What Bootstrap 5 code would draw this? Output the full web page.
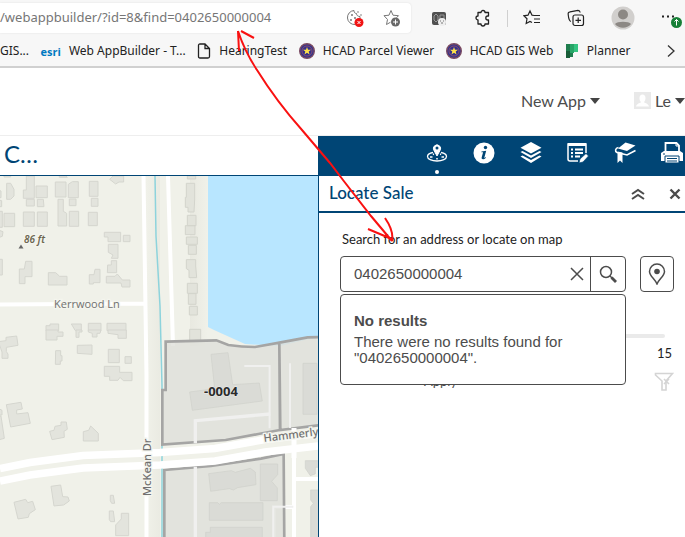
<!DOCTYPE html>
<html lang="en">
<head>
<meta charset="utf-8">
<meta name="viewport" content="width=device-width, initial-scale=1">
<title>Locate Sale</title>
<link href="https://cdn.jsdelivr.net/npm/bootstrap@5.3.0/dist/css/bootstrap.min.css" rel="stylesheet">
<style>
:root { --navy: #004575; --ink: #4c4c4c; }
body { font-family: Lato, "Liberation Sans", sans-serif; font-size: 16px; background: #fff; }
svg { display: block; flex: none; }
button { color: inherit; }
.plain-btn { border: 0; background: none; padding: 0; }

.browser-bar { background: #f7f7f7; border-bottom: 2px solid #d0d0d0; font-family: "Noto Sans", sans-serif; }
.address-row { height: 36px; padding: 3px 2px 3px 0; }
.address-box { flex: 1 1 0; height: 30px; background: #fff; border-radius: 0 4px 4px 0; padding-right: 10px; gap: 19px; box-shadow: 0 0 2px #ddd; }
.address-box input { border: 0; padding: 0; min-width: 0; color: #767676; font-size: 13px; background: none; outline: 0; }
.browser-tools { padding-left: 20px; gap: 26px; }
.tool-rule { width: 1px; height: 17px; background: #d0d0d0; margin: 0 -11px; }
.bookmark-row { height: 30px; font-size: 12px; padding-right: 9px; }
.bookmark-row a { color: #222; text-decoration: none; gap: 8px; white-space: nowrap; }
.esri-mark { color: #0079c1; font: bold 11px "Open Sans", sans-serif; }

.site-head { height: 68px; border-bottom: 1px solid #eee; color: var(--ink); gap: 34px; overflow: hidden; padding-bottom: 2px; }
.site-head button { gap: 4px; }
.caret { border: 5px solid transparent; border-top: 6px solid #444; border-bottom: 0; }

.workspace { display: grid; grid-template-columns: 318fr 367fr; grid-template-rows: 40px 1fr; }
.map-title { border-bottom: 1px solid var(--navy); color: var(--navy); font-size: 24px; padding-left: 4px; line-height: 36px; margin: 0; font-weight: 400; }
.widget-bar { background: var(--navy); color: #fff; gap: 25px; padding: 5px 2px 0 0; }
.widget-bar button { position: relative; height: 24px; }
.widget-bar .is-open::after { content: ""; position: absolute; left: 9px; top: 29px; width: 4px; height: 4px; border-radius: 50%; background: #fff; }
.map-pane { overflow: hidden; background: #f0f1e9; position: relative; }
.map-pane svg { position: absolute; width: 100%; height: 100%; }
.side-panel { border-left: 1px solid var(--navy); color: var(--ink); }
.panel-head { height: 37px; border-bottom: 2px solid var(--navy); padding: 0 4px 0 10px; }
.panel-head h2 { font-size: 17px; color: var(--navy); margin: 0; }
.panel-body { padding: 17px 11px 0 21px; }
.panel-body label { font-size: 13px; line-height: 18px; color: #222; padding-left: 2px; }
.search-row { gap: 14px; margin-top: 8px; }
.search-box { position: relative; border: 1px solid var(--ink); border-radius: 4px; height: 36px; }
.search-box input { border: 0; outline: 0; min-width: 0; padding: 0 0 2px 13px; background: none; color: var(--ink); font: 15px "Liberation Sans", sans-serif; }
.search-box .clear { width: 26px; }
.search-box .go { width: 35px; border-left: 1px solid var(--ink); }
.pin-btn { border: 1px solid var(--ink); border-radius: 4px; width: 34px; height: 36px; background: #fff; padding: 0; }
.result-menu { position: absolute; left: -1px; right: -1px; top: 37px; height: 91px; z-index: 2; background: #fff; border: 1px solid var(--ink); border-radius: 4px; padding: 18px 13px; font: 15px/16px "Liberation Sans", sans-serif; }
.result-menu strong { display: block; margin-bottom: 5px; }
.track { height: 4px; border-radius: 2px; background: #eaeaea; margin: 42px 9px 0 0; }
.limit { font-size: 13px; line-height: 18px; color: #222; margin: 6px 2px 0 0; }
.apply-row { margin-top: 10px; font-size: 13px; line-height: 18px; padding-left: 84px; }
.markup { position: absolute; left: 0; top: 0; pointer-events: none; z-index: 5; }
</style>
<script src="https://cdn.jsdelivr.net/npm/bootstrap@5.3.0/dist/js/bootstrap.bundle.min.js"></script>
</head>
<body class="min-vh-100 d-flex flex-column position-relative overflow-hidden">

<div class="browser-bar">
  <div class="address-row d-flex align-items-center">
    <div class="address-box d-flex align-items-center">
      <input class="flex-grow-1" type="text" aria-label="Address" value="/webappbuilder/?id=8&amp;find=0402650000004">
      <button class="plain-btn" aria-label="Cookies blocked">
        <svg width="18" height="18" viewBox="0 0 18 18" fill="none" stroke="#777"><path d="M8 1.500a7 7 0 1 0 1 14M8 1.500c0 2 1 3 2.500 3 0 2 1.500 3 3.500 3v2"/><g fill="#777" stroke="none"><circle cx="6" cy="6" r="1"/><circle cx="5" cy="11" r="1"/><circle cx="9" cy="9" r="1"/><circle cx="12" cy="3" r=".8"/><circle cx="15" cy="6" r=".8"/></g><circle cx="13" cy="13.500" r="4.500" fill="#f01414" stroke="none"/><path d="M11.500 12l3 3m0-3l-3 3" stroke="#fff"/></svg>
      </button>
      <button class="plain-btn" aria-label="Add to favorites">
        <svg width="18" height="18" viewBox="0 0 18 18" fill="none" stroke="#777"><path d="M7.500 13.200L3.500 15.500l1-5L1 6.700l5-.5 2-4.700 2 4.700 5.500.5-2 2" stroke-linejoin="round"/><circle cx="12.500" cy="13" r="4.500" fill="#686868" stroke="none"/><path d="M12.500 10.500v5m-2.500-2.500h5" stroke="#fff"/></svg>
      </button>
    </div>
    <div class="browser-tools d-flex align-items-center">
      <button class="plain-btn" aria-label="Extension">
        <svg width="17" height="17" viewBox="0 0 17 17"><rect x="1" y="2" width="14" height="13" rx="2" fill="#505050"/><path d="M3 6l2-2 2 2v4l-2 2-2-2zM9 5h4v4H9z" fill="none" stroke="#999"/><circle cx="11" cy="12" r="4" fill="#eee"/><path d="M9 11h1m2 0h1m-3 2h2" stroke="#777"/></svg>
      </button>
      <button class="plain-btn" aria-label="Extensions">
        <svg width="18" height="18" viewBox="0 0 18 18" fill="none" stroke="#222" stroke-width="1.300"><path d="M4 3.500H7a2 2 0 0 1 4 0h3.500V7h-.7a2 2 0 0 0 0 4h.7v4H11a2 2 0 0 1-4 0H4v-4a2 2 0 0 1 0-4z" stroke-linejoin="round"/></svg>
      </button>
      <span class="tool-rule"></span>
      <button class="plain-btn" aria-label="Favorites">
        <svg width="18" height="18" viewBox="0 0 18 18" fill="none" stroke="#222" stroke-width="1.200"><path d="M11 6.500L9 6.200 7 2 5 6.200l-4 .6 3 3-.8 4.700L7 12.500l2 1M11 6.500h6m-6 3.500h6m-6 3.500h6"/></svg>
      </button>
      <button class="plain-btn" aria-label="Collections">
        <svg width="18" height="18" viewBox="0 0 18 18" fill="none" stroke="#222" stroke-width="1.200"><rect x="6" y="6" width="10.500" height="10.500" rx="2"/><path d="M11.200 8.500v5.500m-2.700-2.700H14M4 12.500C2 12 1.500 9 1.200 5.500 1 4 1.500 3 3 2.800l8-1.500c1.500 0 2 .8 2.200 2.200"/></svg>
      </button>
      <button class="plain-btn" aria-label="Profile">
        <svg width="24" height="24" viewBox="0 0 24 24"><circle cx="12" cy="12" r="11.500" fill="#d1cfcd"/><circle cx="12" cy="8.500" r="5" fill="#8c8884"/><path d="M4 18c2-3 14-3 16 0-4 5-12 5-16 0z" fill="#8c8884"/></svg>
      </button>
      <button class="plain-btn" aria-label="Settings, update available">
        <svg width="22" height="22" viewBox="0 0 22 22"><path d="M1 9.500h2m3 0h2m3 0h2" stroke="#222" stroke-width="2"/><circle cx="15.500" cy="15.500" r="5.500" fill="#178037"/><path d="M15.500 18.500v-6m-2 2l2-2 2 2" fill="none" stroke="#fff"/></svg>
      </button>
    </div>
  </div>
  <nav class="bookmark-row d-flex align-items-center justify-content-between" aria-label="Bookmarks">
    <a class="d-flex" href="#">GIS...</a>
    <a class="d-flex align-items-center" href="#"><span class="esri-mark">esri</span>Web AppBuilder - T...</a>
    <a class="d-flex align-items-center" href="#"><svg width="14" height="16" viewBox="0 0 14 16" fill="none" stroke="#222" stroke-width="1.300"><path d="M1.500 2.500q0-1.500 1.500-1.500h5l4.500 4.500v8q0 1.500-1.500 1.500H3q-1.500 0-1.500-1.500zM8 1v4.500h4.500"/></svg>HearingTest</a>
    <a class="d-flex align-items-center" href="#"><svg width="16" height="16" viewBox="0 0 16 16"><circle cx="8" cy="8" r="7.300" fill="#33358c" stroke="#7b4b62" stroke-width="1.400"/><circle cx="8" cy="8" r="5" fill="#34308a" stroke="#8a4b70"/><path d="M8 4l1 2.800h3L9.700 8.500l.8 2.900L8 9.700l-2.500 1.700.8-2.900L4 6.800h3z" fill="#ffe14a"/></svg>HCAD Parcel Viewer</a>
    <a class="d-flex align-items-center" href="#"><svg width="16" height="16" viewBox="0 0 16 16"><circle cx="8" cy="8" r="7.300" fill="#33358c" stroke="#7b4b62" stroke-width="1.400"/><circle cx="8" cy="8" r="5" fill="#34308a" stroke="#8a4b70"/><path d="M8 4l1 2.800h3L9.700 8.500l.8 2.900L8 9.700l-2.500 1.700.8-2.900L4 6.800h3z" fill="#ffe14a"/></svg>HCAD GIS Web</a>
    <a class="d-flex align-items-center" href="#"><svg width="14" height="16" viewBox="0 0 14 16"><path d="M1 1h7v13H1z" fill="#1f7d4d"/><path d="M1 8h4v7H1z" fill="#185c37"/><path d="M5 1h4v9H5z" fill="#27a567"/><path d="M9 1h4v8H9z" fill="#35c481"/></svg>Planner</a>
    <button class="plain-btn ms-4" aria-label="More bookmarks"><svg width="10" height="14" viewBox="0 0 10 14" fill="none" stroke="#333" stroke-width="1.300"><path d="M2 1.500L8 7l-6 5.500"/></svg></button>
  </nav>
</div>

<header class="site-head d-flex align-items-center justify-content-end">
  <button class="plain-btn d-flex align-items-center">New App<span class="caret"></span></button>
  <button class="plain-btn d-flex align-items-center"><svg width="17" height="17" viewBox="0 0 17 17"><path fill="#e9e9e9" d="M0 0h17v17H0z"/><path fill="#fff" d="M8.500 2.500c4 0 3.500 6 1.500 7.500 0 1 4 1 5 4.500H2c1-3.500 5-3.500 5-4.500-2-1.500-2.500-7.500 1.500-7.500z"/></svg>Le<span class="caret"></span></button>
</header>

<main class="workspace flex-grow-1">
  <h1 class="map-title">C…</h1>
  <div class="widget-bar d-flex justify-content-end">
    <button class="plain-btn is-open" aria-label="Locate">
      <svg width="22" height="22" viewBox="0 0 22 22" fill="none" stroke="#fff"><path d="M7 10.500C4 11 1.500 12.500 1.500 14.500c0 2.500 4 4.500 9.500 4.500s9.500-2 9.500-4.500c0-2-2.500-3.500-5.500-4" stroke-width="1.300"/><path d="M11 14L8 8.500a3.600 3.600 0 1 1 6 0z" fill="#fff"/><circle cx="11" cy="6" r="1.500" fill="#004575" stroke="none"/><path d="M4 15h2.500m9 0H18m-7 1v1.500M7 12l1 .5m7-.5l-1 .5" stroke-width="1.500"/></svg>
    </button>
    <button class="plain-btn" aria-label="About">
      <svg width="22" height="22" viewBox="0 0 22 22"><circle cx="11" cy="11" r="10.500" fill="#fff"/><circle cx="12.500" cy="5.500" r="1.700" fill="#004575"/><path d="M8.500 9.500l4.700-.8-2 7.300 1.800-1-.3 1c-1.500 1.500-4.700 2-4 -.7l1.400-5-1.800-.1z" fill="#004575"/></svg>
    </button>
    <button class="plain-btn" aria-label="Layers">
      <svg width="22" height="22" viewBox="0 0 22 22" fill="#fff"><path d="M11 0l10.500 5.800L11 11.600.5 5.800zM.5 10l2-1L11 13.500 19.500 9l2 1L11 16zM.5 14.500l2-1L11 18l8.500-4.500 2 1L11 21z"/></svg>
    </button>
    <button class="plain-btn" aria-label="Edit">
      <svg width="22" height="22" viewBox="0 0 22 22" fill="none" stroke="#fff"><path d="M11 19H3q-2 0-2-2V2h18v9" stroke-width="1.500"/><path d="M1 2.500h18" stroke-width="3"/><path d="M4 7.500h2m2 0h8m-12 3.500h2m2 0h8m-12 3.500h2m2 0h5" stroke-width="1.800"/><path d="M12 21l1-4 6-5.500 2.500 2.500-5.500 6z" fill="#fff" stroke="#004575" stroke-width=".7"/></svg>
    </button>
    <button class="plain-btn" aria-label="Bookmarks">
      <svg width="22" height="22" viewBox="0 0 22 22"><path fill="#fff" d="M11.500 .5L21.500 3.500 13 9 4 6.500z"/><path d="M4.500 5.500C1 6 .8 9.500 3 10.500l10 2.500 8.500-4.500" fill="none" stroke="#fff" stroke-width="1.600"/><path fill="#fff" d="M3.500 9.500L8.500 10.500V21L6 18.500 3.500 21z"/></svg>
    </button>
    <button class="plain-btn" aria-label="Print">
      <svg width="22" height="22" viewBox="0 0 22 22"><path d="M0 11l3-2h16l3 2v8H0z" fill="#fff"/><path d="M4.500 9V1h11l2.500 2.500V9" fill="none" stroke="#fff" stroke-width="1.800"/><path d="M15 1v3h3" fill="none" stroke="#fff"/><path d="M4 14h14v7H4z" fill="#fff" stroke="#004575"/><path d="M6 16.500h10M6 19h10M2 12h2" stroke="#004575"/></svg>
    </button>
  </div>

  <section class="map-pane" aria-label="Map">
    <svg viewBox="0 176 318 361" preserveAspectRatio="xMinYMin slice" font-family="'Noto Sans', sans-serif">
      <defs><linearGradient id="strip"><stop offset="0" stop-color="#f0f1e9"/><stop offset=".5" stop-color="#e3e3da"/><stop offset="1" stop-color="#f0f1e9"/></linearGradient></defs>
      <path fill="#f0f1e9" d="M0 176h318v361H0z"/>
      <path fill="url(#strip)" d="M146 176h14v361h-14zM190 176h18v170h-18z"/>
      <!-- water -->
      <path fill="#b8e6ff" d="M208 176h110v162l-13 2-25 6-35-2-31-14-6-3z"/>
      <!-- buildings, west block -->
      <g transform="translate(0 130) scale(.3333)" fill="#e3e4dd" stroke="#d5d6cf" stroke-width="3">
        <path d="M-5 180l8 3v20h-8zM-5 210l10 2v18h-10zM20 160h12l10 18v20l-10 10H20zM79 138h24v67H70v-25h9zM108 168h34v35h-34zM79 208h24v20H79zM112 208h18l2 22h-20zM166 156h32v45h-32zM205 163l12-8h18v48h-30zM208 207h20v20h-20zM268 154h26v45h-26zM274 205h20v24h-20zM329 148l10-10h32v18h-14l-10 6zM178 138h20l4 4h-24zM12 137h20v4H12zM-5 244h12v48H-5zM12 250h32v40H12zM70 246h33v43H70zM112 246h30v43h-30zM174 208h16v36l10 6v38h-26zM208 244h28v45h-28zM265 247h27v40h-27zM-5 300l14 5-2 14-12 4zM-5 388h12v47H-5zM58 417h15l4-23h19v46H75v21H58zM145 428h22l12 11h22v26h-56zM268 434h14l3-16h15v40h-20v4h-12zM313 307h49v28h-38v-14h-11zM370 316h20v19h-20zM325 343h29v42h-20l5-10-14-8zM323 405h11v-13h16v36h-28zM319 439h26l7-7 15 18h23v21h-24l-3-12h-44zM138 587h12v-5h26v20h-38zM214 582h30v20h-18zM265 580h38v22h-38zM321 580h57v22h-57z"/>
      </g>
      <g transform="translate(0 330) scale(.3333)" fill="#e3e4dd" stroke="#d5d6cf" stroke-width="3">
        <path d="M138 0h36v6h15v13h-18v11h-33zM228 0h18v6h-9v16h-9zM265 0h38l-3 10h-9v11h-14V10l-12-4zM324 0h55v25h-25V14l-30-4zM-5 35l23-3v-10l32-4 4 28-35 6v13l5 7v13H6V66l-4-11zM167 62h15v15h4v16h-5v10h-15zM232 46l44-1v28l-44-3zM325 58h33v40h-33zM375 80h19v20h-19zM313 109h46v18h37v25h-26l-10-10-6 9h-25v-12h-16zM19 224l44-7 4 20-17 3v12l34-4 7 32-59 11zM-5 235l11 6v14H-5zM-5 258h8l10 67-18 5zM149 304l13-3 3-12 18-3v-10h16l3 22-10 6 1 18-37 7zM250 305l16-4 6-13 23 22v23h-45zM153 469l29-4 6 35 16 1 4 12-17 12-29 3zM42 517l35-9 6 10 15-4 8 25-18 12-3 11-31 5zM331 496h9l4 24h-9l-4-8zM328 543h12l4 32h-12l-4-6zM347 585l17-18v-17h22v67h-39z"/>
      </g>
      <!-- buildings along the water -->
      <g transform="translate(150 130) scale(.3333)" fill="#e2e3db" stroke="#d3d4cc" stroke-width="3">
        <path d="M112 138h25v9h-25zM109 160h25v50l-2 36h-18v-14h-8v-30h3zM112 256h26v31h-26zM106 287h29v27h-29zM109 321h33v22h-33zM115 346h24v27h-24zM109 389h28v19l3 35h-23v-22l-8-5zM112 460h30v30h-30zM115 491h23v32h-23zM118 529h24v26h-24zM119 598h33v35h-33z"/>
      </g>
      <!-- creek and local streets -->
      <path fill="none" stroke="#8dd3dc" stroke-width="1.500" d="M155 176l1 60 4 70 2 80v151"/>
      <g fill="none" stroke="#fff" stroke-width="4">
        <path d="M143.500 176l3 200v161M168 176l5 170M0 304.500l145-1"/>
        <path d="M294 430v107M294 479h24M274 537v-30h20" stroke-width="4"/>
      </g>
      <!-- selected parcels -->
      <g transform="translate(150 330) scale(.3333)">
        <g fill="#dfe0da" fill-opacity=".8" stroke="#a5a5a4" stroke-width="8">
          <path d="M47 35l152-4 36 14q40 6 80 6l73-13 2 262-65 12-98 18-190 14V180h10zM388 38l85-16 50-1v263l-132 16z"/>
          <path d="M43 640V420l140-12 150-22 68-14 2 268z"/>
        </g>
        <g fill="none" stroke="#f0f0ef" stroke-width="10"><path d="M136 340v-68l225-20M136 410v230"/><path d="M283 108h76v187M420 100v194M370 640V530h60" stroke-width="6"/></g>
        <g fill="#dadbd6" stroke="#cfd0ca" stroke-width="2"><path d="M183 73l51-5 14 96 80-5 9 54-210 28-8-55 75-10zM459 100h42v153h-42zM176 431l68-9 12 5 45-12 15 11 2 38-55 9-13 7-12-4-56 8zM331 402h52v32l-18 20 17 20v38h-51zM178 518h25l5 5 6-5h125v53H178zM167 607h14v-15h156v48H167zM466 392h60v20h-30v20l-15 5-15-22zM482 480h38v160h-38v-110l8-10-8-10z"/></g>
      </g>
      <!-- divided avenue -->
      <path fill="none" stroke="#fff" stroke-width="7.500" d="M0 468.500l30-6 53-7 77-3 55-4 50-9 53-6M0 481l30-6 53-7 77-3 55-4 50-9 53-6"/>
      <path stroke="#fff" stroke-width="5" d="M294 428v30"/>
      <g fill="#707070" stroke="#f4f5ee" stroke-width="2.500" paint-order="stroke" font-size="11" font-weight="500">
        <text x="54" y="308" font-family="'Open Sans', sans-serif">Kerrwood Ln</text>
        <text transform="translate(151 496) rotate(-90)">McKean Dr</text>
        <text transform="translate(264 442) rotate(-7)">Hammerly</text>
        <text x="24" y="243" font-size="10" font-style="italic" font-weight="600" fill="#6c6650">86 ft</text>
      </g>
      <path d="M18.500 248.500l2.500-4 2.500 4z" fill="#666"/>
      <text x="204" y="396" font-size="13" font-weight="700" fill="#2b2b2b" stroke="#eee" stroke-width="1" paint-order="stroke">-0004</text>
    </svg>
  </section>

  <aside class="side-panel">
    <div class="panel-head d-flex align-items-center">
      <h2 class="me-auto">Locate Sale</h2>
      <button class="plain-btn me-4" aria-label="Collapse"><svg width="14" height="12" viewBox="0 0 14 12" fill="none" stroke="#4c4c4c" stroke-width="2"><path d="M1 6l6-4 6 4M1 11l6-4 6 4"/></svg></button>
      <button class="plain-btn" aria-label="Close"><svg width="12" height="12" viewBox="0 0 12 12" stroke="#4c4c4c" stroke-width="2.400"><path d="M1.500 1.500l9 9m0-9l-9 9"/></svg></button>
    </div>
    <div class="panel-body">
      <label class="d-block" for="place">Search for an address or locate on map</label>
      <div class="search-row d-flex">
        <div class="search-box d-flex flex-grow-1">
          <input id="place" class="flex-grow-1" type="text" value="0402650000004">
          <button class="plain-btn clear d-flex align-items-center justify-content-center" aria-label="Clear"><svg width="14" height="14" viewBox="0 0 14 14" stroke="#4c4c4c" stroke-width="1.500"><path d="M1 1l12 12m0-12L1 13"/></svg></button>
          <button class="plain-btn go d-flex align-items-center justify-content-center" aria-label="Search"><svg width="18" height="18" viewBox="0 0 18 18" fill="none" stroke="#4c4c4c"><circle cx="7" cy="7" r="5.500" stroke-width="1.500"/><path d="M11 11l2 2" stroke-width="1.500"/><path d="M12.500 12.500l4.500 4.500" stroke-width="2.800"/></svg></button>
          <div class="result-menu"><strong>No results</strong>There were no results found for "0402650000004".</div>
        </div>
        <button class="pin-btn d-flex align-items-center justify-content-center" aria-label="Pick on map"><svg width="18" height="22" viewBox="0 0 18 22" fill="none" stroke="#4c4c4c" stroke-width="1.500"><path d="M9 21C7 16 1.500 13 1.500 8.500a7.500 7.500 0 0 1 15 0C16.500 13 11 16 9 21z"/><circle cx="9" cy="8.500" r="2.800" fill="#4c4c4c" stroke="none"/></svg></button>
      </div>
      <div class="track"></div>
      <div class="limit text-end">15</div>
      <div class="apply-row d-flex justify-content-between"><span>Apply</span><button class="plain-btn" aria-label="Clear filter"><svg width="20" height="20" viewBox="0 0 20 20" fill="none" stroke="#d4d4d4" stroke-width="1.600"><path d="M1.500 1.500h17L12 9v9H8V9L1.500 3z"/><path d="M10 7l5 5m0-5l-5 5"/></svg></button></div>
    </div>
  </aside>
</main>

<svg class="markup" width="420" height="260" viewBox="0 0 420 260" fill="none" stroke="#f91111" stroke-width="2" aria-hidden="true"><path d="M238 31q7 21 19 39 20 32 45 60l28 33 13 17 28 36 21 25M239 51l-1-20M254 38l-13-7M368 229l19 8 6 3M385 218q9 13 7 23"/></svg>
</body>
</html>
